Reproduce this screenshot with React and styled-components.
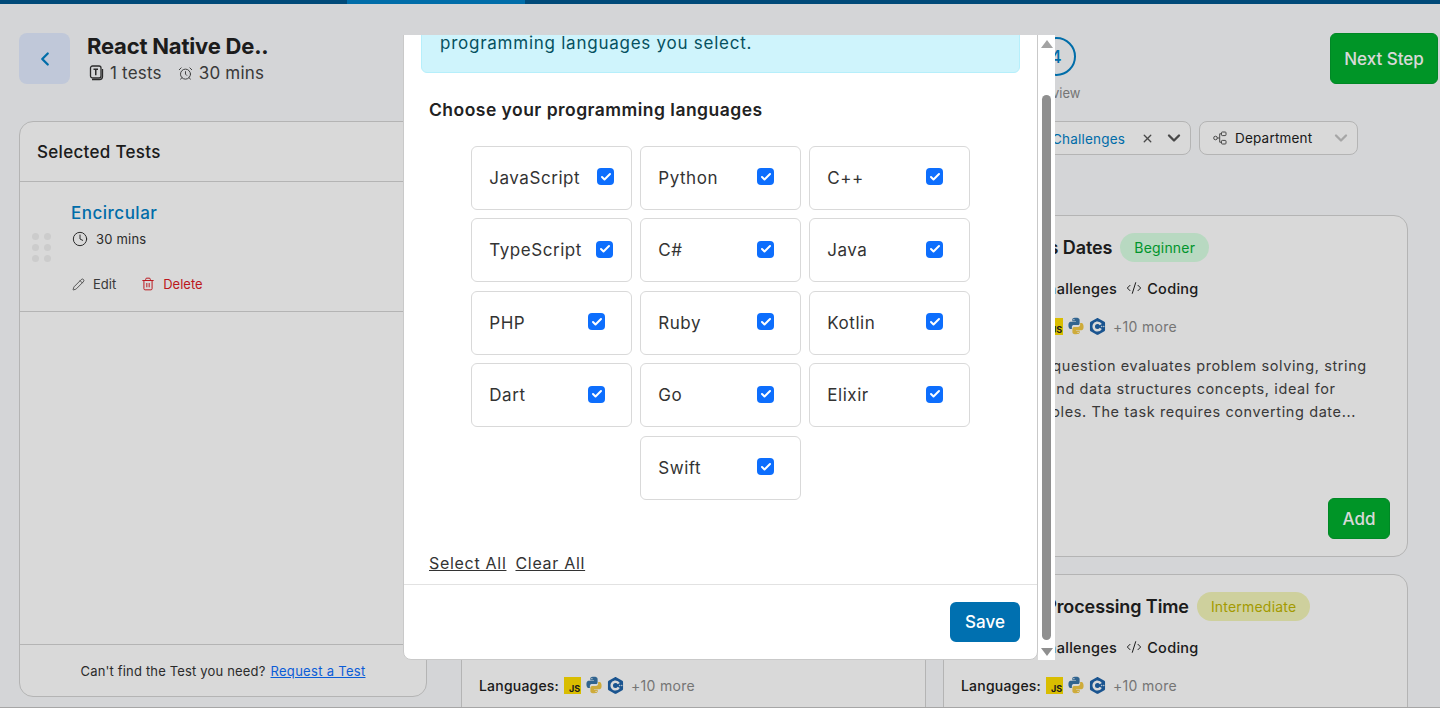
import React, { useLayoutEffect, useRef } from 'react'
import styled, { createGlobalStyle } from 'styled-components'
import {
    AlarmClock, Check, ChevronDown, ChevronLeft, Clock, CodeXml, Pencil, Trash2, X, Puzzle,
} from 'lucide-react'
import { SiCplusplus } from 'react-icons/si'

const GlobalStyle = createGlobalStyle`
    html, body {
        margin: 0;
        height: 708px;
        overflow: hidden;
        background: #f9fbfd;
        font-family: "Inter", "Noto Sans", sans-serif;
        color: #222;
    }
    * { box-sizing: border-box; }
`

const Page = styled.div`
    height: 708px;
    overflow: hidden;
    display: flex;
    flex-direction: column;
    border-bottom: 1px solid #c4c4c4;
`
const ProgressBar = styled.div`
    height: 4px;
    flex: none;
    background: linear-gradient(to right, #00578f 347px, #0080c7 347px, #0080c7 525px, #00578f 525px);
`
const Header = styled.div`
    display: flex;
    align-items: flex-start;
    padding: 29px 2px 0 19px;
    height: 117px;
    flex: none;
`
const BackButton = styled.button`
    width: 51px;
    height: 51px;
    border: 0;
    border-radius: 8px;
    background: #e2ebff;
    color: #0080c7;
    display: flex;
    align-items: center;
    justify-content: center;
    padding: 0;
`
const TitleBlock = styled.div`
    margin-left: 17px;
`
const PageTitle = styled.div`
    font-size: 22px;
    line-height: 28px;
    font-weight: 700;
    margin-top: -1px;
    letter-spacing: -.2px;
`
const SubRow = styled.div`
    display: flex;
    align-items: center;
    margin-top: 1px;
    font-size: 17px;
    line-height: 24px;
    color: #444;
    letter-spacing: .2px;
`
const SubItem = styled.span`
    display: flex;
    align-items: center;
    gap: 6px;
    margin-left: 2px;
    margin-right: 14px;
`
const Stepper = styled.div`
    margin-left: auto;
    margin-right: 251px;
    margin-top: 4px;
    display: flex;
    gap: 70px;
`
const Step = styled.div`
    display: flex;
    flex-direction: column;
    align-items: center;
    width: 46px;
`
const StepCircle = styled.div`
    width: 39px;
    height: 39px;
    border-radius: 50%;
    border: 2px solid #0080c7;
    color: #0080c7;
    font-size: 17px;
    font-weight: 500;
    display: flex;
    align-items: center;
    justify-content: center;
`
const StepLabel = styled.div`
    font-size: 13px;
    line-height: 18px;
    margin-top: 8px;
    color: #8a8a8a;
    white-space: nowrap;
`
const NextButton = styled.button`
    width: 108px;
    height: 51px;
    border: 1px solid #00a02c;
    border-radius: 6px;
    background: #00b02e;
    color: #fff;
    font: 500 17px "Inter", sans-serif;
    padding: 0;
`
const Body = styled.div`
    display: flex;
    padding-left: 19px;
    gap: 34px;
    flex: 1;
    min-height: 0;
`
const Sidebar = styled.div`
    width: 408px;
    height: 576px;
    flex: none;
    background: #fff;
    border: 1px solid #d4d4d4;
    border-radius: 14px;
    display: flex;
    flex-direction: column;
`
const SidebarHead = styled.div`
    height: 60px;
    display: flex;
    align-items: center;
    padding-left: 17px;
    font-size: 17px;
    font-weight: 500;
    border-bottom: 1px solid #d4d4d4;
    letter-spacing: .3px;
`
const TestItem = styled.div`
    height: 130px;
    border-bottom: 1px solid #d4d4d4;
    display: flex;
    align-items: center;
    padding-left: 12px;
`
const DragDots = styled.div`
    display: grid;
    grid-template-columns: 7px 7px;
    gap: 4px 4.5px;
    width: 39px;
    margin-top: 2px;
`
const Dot = styled.span`
    width: 7px;
    height: 7px;
    border-radius: 50%;
    background: #f0f0f0;
`
const ItemInfo = styled.div`
    display: flex;
    flex-direction: column;
    margin-top: 2px;
`
const ItemName = styled.div`
    font-size: 17px;
    line-height: 24px;
    font-weight: 500;
    color: #0080c7;
    letter-spacing: .5px;
`
const ItemTime = styled.div`
    display: flex;
    align-items: center;
    gap: 8px;
    margin-top: 4px;
    font-size: 13px;
    line-height: 20px;
    color: #333;
    letter-spacing: .2px;
    padding-left: 1px;
`
const ItemActions = styled.div`
    display: flex;
    gap: 25px;
    margin-top: 25px;
    padding-left: 1px;
`
const ItemAction = styled.span`
    display: flex;
    align-items: center;
    gap: 8px;
    font-size: 13px;
    line-height: 20px;
    color: ${(p) => (p.$danger ? '#dd1c24' : '#444')};
`
const SidebarSpacer = styled.div`
    flex: 1;
`
const SidebarFoot = styled.div`
    height: 52px;
    border-top: 1px solid #d4d4d4;
    display: flex;
    align-items: center;
    justify-content: center;
    gap: 5px;
    font-size: 13px;
    color: #333;
    padding: 1px 0 0 0;
    letter-spacing: .17px;
`
const RequestLink = styled.a`
    color: #0d6efd;
    text-decoration: underline;
    letter-spacing: .3px;
`
const Content = styled.div`
    flex: 1;
    min-width: 0;
`
const Filters = styled.div`
    height: 34px;
    display: flex;
    justify-content: flex-end;
    gap: 8px;
    padding-right: 82px;
`
const Dropdown = styled.div`
    width: ${(p) => p.$width}px;
    height: 34px;
    border: 1px solid #d4d4d4;
    border-radius: 8px;
    background: #fff;
    display: flex;
    align-items: center;
    padding: 0 6px 0 13px;
    font-size: 13.5px;
    color: #222;
`
const DropdownValue = styled.span`
    flex: 1;
    display: flex;
    align-items: center;
    gap: 8px;
    color: ${(p) => (p.$active ? '#0080c7' : '#222')};
    white-space: nowrap;
    letter-spacing: .2px;
    padding-top: ${(p) => (p.$active ? '2px' : '0')};
`
const CardGrid = styled.div`
    margin-top: 60px;
    display: grid;
    grid-template-columns: 465px 465px;
    grid-auto-rows: 342px;
    gap: 17px;
`
const TestCard = styled.div`
    position: relative;
    background: #fff;
    border: 1px solid #d4d4d4;
    border-radius: 14px;
    padding: 16px 17px;
    display: flex;
    flex-direction: column;
`
const CardTitleRow = styled.div`
    display: flex;
    align-items: center;
    gap: 8px;
    height: 30px;
`
const CardTitle = styled.div`
    font-size: 18px;
    font-weight: 600;
    white-space: nowrap;
    letter-spacing: -.1px;
`
const Badge = styled.span`
    height: 29px;
    border-radius: 15px;
    padding: 0 14px;
    display: flex;
    align-items: center;
    font-size: 14px;
    letter-spacing: .2px;
    background: ${(p) => (p.$level === 'Beginner' ? '#d9ffe3' : '#f3f5b9')};
    color: ${(p) => (p.$level === 'Beginner' ? '#00b034' : '#c0b500')};
`
const MetaRow = styled.div`
    display: flex;
    align-items: center;
    gap: 9px;
    margin-top: 14px;
    height: 24px;
    font-size: 14.5px;
    font-weight: 500;
    letter-spacing: .3px;
`
const MetaItem = styled.span`
    display: flex;
    align-items: center;
    gap: 5px;
`
const LanguageRow = styled.div`
    display: flex;
    align-items: center;
    margin-top: 14px;
    height: 24px;
    font-size: 14px;
    font-weight: 500;
    letter-spacing: .2px;
`
const LanguageIcons = styled.span`
    display: flex;
    align-items: center;
    gap: 4px;
    margin-left: 5px;
`
const JsIcon = styled.span`
    width: 17px;
    height: 17px;
    background: #ffdf00;
    color: #222;
    display: flex;
    align-items: flex-end;
    justify-content: flex-end;
    font-size: 9px;
    font-weight: 700;
    line-height: 11px;
    padding-right: 1px;
    letter-spacing: 0;
`
const MoreText = styled.span`
    margin-left: 7px;
    color: #8a8a8a;
    font-weight: 400;
    letter-spacing: .3px;
`
const CardText = styled.div`
    margin-top: 16px;
    font-size: 14.5px;
    line-height: 23px;
    color: #444;
    letter-spacing: .6px;
    white-space: pre;
`
const AddButton = styled.button`
    position: absolute;
    right: 17px;
    bottom: 17px;
    width: 62px;
    height: 41px;
    border: 1px solid #00a02c;
    border-radius: 6px;
    background: #00b02e;
    color: #fff;
    font: 500 17px "Inter", sans-serif;
    padding: 0;
`
const Backdrop = styled.div`
    position: fixed;
    inset: 0;
    background: rgba(0, 0, 0, .15);
`
const ModalScroll = styled.div`
    position: fixed;
    left: 403px;
    top: 35px;
    width: 635px;
    height: 625px;
    overflow: hidden;
`
// the window's scrollbar next to the dialog
const ScrollRail = styled.div`
    position: fixed;
    left: 1038px;
    top: 35px;
    width: 17px;
    height: 625px;
    background: #fff;
    display: flex;
    flex-direction: column;
    align-items: center;
    padding-top: 5px;
`
const RailArrow = styled.span`
    width: 0;
    height: 0;
    border-left: 6px solid transparent;
    border-right: 6px solid transparent;
    ${(p) => (p.$down ? 'border-top: 8px solid #8f8f8f;' : 'border-bottom: 8px solid #a3a3a3;')}
`
const RailThumb = styled.span`
    width: 9px;
    height: 545px;
    margin: 47px 0 8px;
    border-radius: 5px;
    background: #8f8f8f;
`
const ModalCard = styled.div`
    background: #fff;
    border: 1px solid #c9c9c9;
    border-radius: 8px;
    padding-top: 6px;
`
const InfoAlert = styled.div`
    margin: 0 17px;
    padding: 16px 18px 17px;
    font-size: 17px;
    line-height: 24px;
    background: #cff4fc;
    border: 1px solid #b6effb;
    border-radius: 6px;
    color: #055160;
    letter-spacing: .75px;
    white-space: nowrap;
`
const SectionTitle = styled.h3`
    margin: 25px 0 0 25px;
    font-size: 17.5px;
    line-height: 24px;
    font-weight: 600;
    color: #222;
    letter-spacing: .47px;
`
const TileGrid = styled.div`
    margin: 23.75px auto 0;
    width: 500px;
    display: flex;
    flex-wrap: wrap;
    justify-content: center;
    gap: 8.5px 8.5px;
`
const Tile = styled.label`
    width: 160.5px;
    height: 64px;
    border: 1px solid #d9d9d9;
    border-radius: 6px;
    display: flex;
    align-items: center;
    padding-left: 17px;
`
const TileName = styled.span`
    width: ${(p) => p.$width}px;
    font-size: 17px;
    color: #333;
    letter-spacing: .55px;
    flex: none;
`
const CheckBox = styled.span`
    width: 17px;
    height: 17px;
    border-radius: 4px;
    background: #0d6efd;
    color: #fff;
    display: flex;
    align-items: center;
    justify-content: center;
    margin-top: -2px;
`
const BulkRow = styled.div`
    display: flex;
    gap: 9px;
    margin: 51.25px 0 0 25px;
    height: 24px;
    align-items: center;
`
const BulkLink = styled.a`
    font-size: 16px;
    color: #333;
    text-decoration: underline;
    letter-spacing: .7px;
`
const ModalFoot = styled.div`
    margin-top: 9px;
    border-top: 1px solid #e2e2e2;
    height: 75px;
    display: flex;
    align-items: center;
    justify-content: flex-end;
    padding-right: 17px;
`
const SaveButton = styled.button`
    width: 70px;
    height: 40px;
    border: 0;
    border-radius: 6px;
    background: #0070b0;
    color: #fff;
    font: 500 17px "Inter", sans-serif;
    padding: 0;
`

const TestsIcon = () => (
    <svg width="15" height="16" viewBox="0 0 15 16" fill="none" stroke="#333" strokeWidth="1.3">
        <rect x="1.5" y="1" width="10.5" height="12" rx="2" />
        <path d="M3 14.6h7.5a3 3 0 0 0 3-3V4" />
        <path d="M4.5 4.2h4.5M6.75 4.2v6" strokeWidth="1.5" />
    </svg>
)

const DepartmentIcon = () => (
    <svg width="14" height="14" viewBox="0 0 14 14" fill="none" stroke="#555" strokeWidth="1">
        <circle cx="2.5" cy="7" r="1.8" />
        <rect x="8.5" y="1" width="4.5" height="3.6" rx=".8" />
        <rect x="8.5" y="9.4" width="4.5" height="3.6" rx=".8" />
        <path d="M4.3 7h2.4M6.7 2.8h1.8M6.7 11.2h1.8M6.7 2.8v8.4" />
    </svg>
)

const PythonIcon = () => (
    <svg width="18" height="18" viewBox="0 0 24 24">
        <path fill="#3a76a8" d="M11.9 1C6.8 1 7.1 3.2 7.1 3.2v2.400h4.900v.7H5.200S1.900 5.900 1.900 11.100s2.900 5 2.900 5h1.700v-2.400s-.1-2.900 2.800-2.900h4.800s2.700 0 2.700-2.600V3.800S16.900 1 11.900 1zM9.200 2.600a.9.9 0 1 1 0 1.800.9.9 0 0 1 0-1.800z" />
        <path fill="#f2c945" d="M12.100 23c5.100 0 4.800-2.200 4.800-2.200v-2.400H12v-.7h6.800s3.300.4 3.300-4.800-2.900-5-2.900-5h-1.700v2.400s.1 2.900-2.800 2.900H9.900s-2.700 0-2.700 2.600v4.400S7.100 23 12.100 23zm2.700-1.600a.9.9 0 1 1 0-1.800.9.9 0 0 1 0 1.800z" />
    </svg>
)

const Languages = () => (
    <LanguageRow>
        Languages:
        <LanguageIcons>
            <JsIcon>JS</JsIcon>
            <PythonIcon />
            <SiCplusplus size={17} color="#1f63a8" />
        </LanguageIcons>
        <MoreText>+10 more</MoreText>
    </LanguageRow>
)

const cards = [
    { title: 'Find the Missing Number', level: 'Beginner', text: '' },
    {
        title: 'Normalizes Dates', level: 'Beginner',
        text: 'This coding question evaluates problem solving, string\nprocessing and data structures concepts, ideal for\nentry-level roles. The task requires converting date...',
    },
    { title: 'Longest Common Prefix', level: 'Beginner', text: '' },
    { title: 'Minimum Processing Time', level: 'Intermediate', text: '' },
]

const languages = [
    ['JavaScript', 108], ['Python', 99], ['C++', 99],
    ['TypeScript', 107], ['C#', 99], ['Java', 99],
    ['PHP', 99], ['Ruby', 99], ['Kotlin', 99],
    ['Dart', 99], ['Go', 99], ['Elixir', 99],
    ['Swift', 99],
]

const App = () => {
    const scrollRef = useRef(null)

    useLayoutEffect(() => {
        scrollRef.current.scrollTop = 52
    }, [])

    return (
        <>
            <GlobalStyle />
            <Page>
                <ProgressBar />
                <Header>
                    <BackButton><ChevronLeft size={22} strokeWidth={2.5} /></BackButton>
                    <TitleBlock>
                        <PageTitle>React Native De..</PageTitle>
                        <SubRow>
                            <SubItem><TestsIcon />1 tests</SubItem>
                            <SubItem><AlarmClock size={15} strokeWidth={1.5} />30 mins</SubItem>
                        </SubRow>
                    </TitleBlock>
                    <Stepper>
                        <Step><StepCircle>1</StepCircle><StepLabel>Details</StepLabel></Step>
                        <Step><StepCircle>2</StepCircle><StepLabel>Tests</StepLabel></Step>
                        <Step><StepCircle>3</StepCircle><StepLabel>Settings</StepLabel></Step>
                        <Step><StepCircle>4</StepCircle><StepLabel>Preview</StepLabel></Step>
                    </Stepper>
                    <NextButton>Next Step</NextButton>
                </Header>
                <Body>
                    <Sidebar>
                        <SidebarHead>Selected Tests</SidebarHead>
                        <TestItem>
                            <DragDots>
                                {[0, 1, 2, 3, 4, 5].map((i) => <Dot key={i} />)}
                            </DragDots>
                            <ItemInfo>
                                <ItemName>Encircular</ItemName>
                                <ItemTime><Clock size={16} strokeWidth={1.5} />30 mins</ItemTime>
                                <ItemActions>
                                    <ItemAction><Pencil size={13} strokeWidth={1.5} />Edit</ItemAction>
                                    <ItemAction $danger><Trash2 size={14} strokeWidth={1.7} />Delete</ItemAction>
                                </ItemActions>
                            </ItemInfo>
                        </TestItem>
                        <SidebarSpacer />
                        <SidebarFoot>
                            Can't find the Test you need?
                            <RequestLink href="#">Request a Test</RequestLink>
                        </SidebarFoot>
                    </Sidebar>
                    <Content>
                        <Filters>
                            <Dropdown $width={226}>
                                <DropdownValue $active><Puzzle size={14} />Coding Challenges</DropdownValue>
                                <X size={13} strokeWidth={2.5} color="#555" />
                                <ChevronDown size={20} strokeWidth={2.8} color="#555" style={{ marginLeft: 10 }} />
                            </Dropdown>
                            <Dropdown $width={159}>
                                <DropdownValue><DepartmentIcon />Department</DropdownValue>
                                <ChevronDown size={20} strokeWidth={2.8} color="#c4c4c4" />
                            </Dropdown>
                        </Filters>
                        <CardGrid>
                            {cards.map((card) => (
                                <TestCard key={card.title}>
                                    <CardTitleRow>
                                        <CardTitle>{card.title}</CardTitle>
                                        <Badge $level={card.level}>{card.level}</Badge>
                                    </CardTitleRow>
                                    <MetaRow>
                                        <MetaItem><Puzzle size={15} />Coding Challenges</MetaItem>
                                        <MetaItem><CodeXml size={16} strokeWidth={1.5} />Coding</MetaItem>
                                    </MetaRow>
                                    <Languages />
                                    <CardText>{card.text}</CardText>
                                    <AddButton>Add</AddButton>
                                </TestCard>
                            ))}
                        </CardGrid>
                    </Content>
                </Body>
            </Page>
            <Backdrop />
            <ModalScroll ref={scrollRef}>
                <ModalCard>
                    <InfoAlert>
                        Candidates can attempt the coding questions in any of the
                        <br />
                        programming languages you select.
                    </InfoAlert>
                    <SectionTitle>Choose your programming languages</SectionTitle>
                    <TileGrid>
                        {languages.map(([name, width]) => (
                            <Tile key={name}>
                                <TileName $width={width}>{name}</TileName>
                                <CheckBox><Check size={12} strokeWidth={4} /></CheckBox>
                            </Tile>
                        ))}
                    </TileGrid>
                    <BulkRow>
                        <BulkLink href="#">Select All</BulkLink>
                        <BulkLink href="#">Clear All</BulkLink>
                    </BulkRow>
                    <ModalFoot>
                        <SaveButton>Save</SaveButton>
                    </ModalFoot>
                </ModalCard>
            </ModalScroll>
            <ScrollRail>
                <RailArrow />
                <RailThumb />
                <RailArrow $down />
            </ScrollRail>
        </>
    )
}

export default App
